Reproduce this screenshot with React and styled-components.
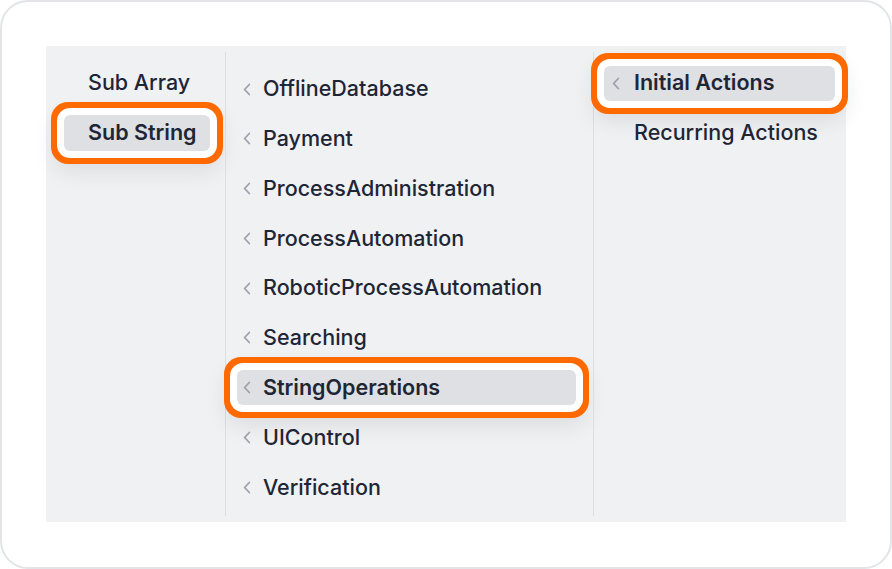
import React from "react";
import styled, { createGlobalStyle } from "styled-components";

const Global = createGlobalStyle`
  html, body { margin: 0; padding: 0; background: #ffffff; }
  body { font-family: Inter, "Noto Sans", sans-serif; -webkit-font-smoothing: antialiased; }
`;

const Card = styled.div`
  width: 892px;
  height: 569px;
  box-sizing: border-box;
  border: 2px solid #e2e4e8;
  border-radius: 28px;
  background: #ffffff;
  padding: 44px;
`;

const Panel = styled.div`
  display: flex;
  width: 800px;
  height: 476px;
  background: #f0f1f3;
`;

const Column = styled.div`
  display: flex;
  flex-direction: column;
  box-sizing: border-box;
  width: ${(p) => p.$width};
  flex: ${(p) => (p.$width ? "none" : "1")};
  gap: ${(p) => p.$gap}px;
  padding: ${(p) => p.$pad};
  margin: ${(p) => (p.$divider ? "6px 0" : "0")};
  border-left: ${(p) => (p.$divider ? "1px solid #dcdee2" : "none")};
`;

const Item = styled.div`
  display: flex;
  align-items: center;
  flex: none;
  height: ${(p) => p.$h}px;
  padding-left: ${(p) => p.$indent}px;
  border-radius: 6px;
  font-size: 21.5px;
  line-height: 1;
  white-space: nowrap;
  color: #1e2636;
  font-weight: ${(p) => (p.$active ? 600 : 500)};
  background: ${(p) => (p.$active ? "#dfe0e4" : "transparent")};
  box-shadow: ${(p) =>
    p.$highlight
      ? "0 0 0 7px #ffffff, 0 0 0 13px #ff6a00, 0 10px 22px 10px rgba(30, 35, 50, 0.10)"
      : "none"};
`;

const ChevronSlot = styled.span`
  display: inline-flex;
  width: 8px;
  height: 13px;
  margin-right: ${(p) => p.$gap}px;
  visibility: ${(p) => (p.$hidden ? "hidden" : "visible")};
  svg { display: block; }
`;

const Chevron = ({ hidden, gap = 12 }) => (
  <ChevronSlot $hidden={hidden} $gap={gap}>
    <svg width="8" height="13" viewBox="0 0 8 13" fill="none">
      <path d="M6.3 1.5 L1.6 6.5 L6.3 11.5" stroke="#9ca1ab" strokeWidth="1.8" strokeLinecap="round" strokeLinejoin="round" />
    </svg>
  </ChevronSlot>
);

const col2Items = [
  "OfflineDatabase",
  "Payment",
  "ProcessAdministration",
  "ProcessAutomation",
  "RoboticProcessAutomation",
  "Searching",
  "StringOperations",
  "UIControl",
  "Verification",
];

export default function App() {
  return (
    <>
      <Global />
      <Card>
        <Panel>
          <Column $width="179px" $gap={14} $pad="19px 15px 0 18px">
            <Item $h={36} $indent={24}>Sub Array</Item>
            <Item $h={36} $indent={24} $active $highlight>Sub String</Item>
          </Column>
          <Column $width="368px" $gap={14.8} $pad="19.5px 17px 0 11px" $divider>
            {col2Items.map((t) => {
              const sel = t === "StringOperations";
              return (
                <Item key={t} $h={35} $indent={6} $active={sel} $highlight={sel}>
                  <Chevron />
                  {t}
                </Item>
              );
            })}
          </Column>
          <Column $gap={15} $pad="13.5px 11px 0 10px" $divider>
            <Item $h={35} $indent={8} $active $highlight>
              <Chevron gap={14} />
              Initial Actions
            </Item>
            <Item $h={35} $indent={8}>
              <Chevron hidden gap={14} />
              Recurring Actions
            </Item>
          </Column>
        </Panel>
      </Card>
    </>
  );
}
